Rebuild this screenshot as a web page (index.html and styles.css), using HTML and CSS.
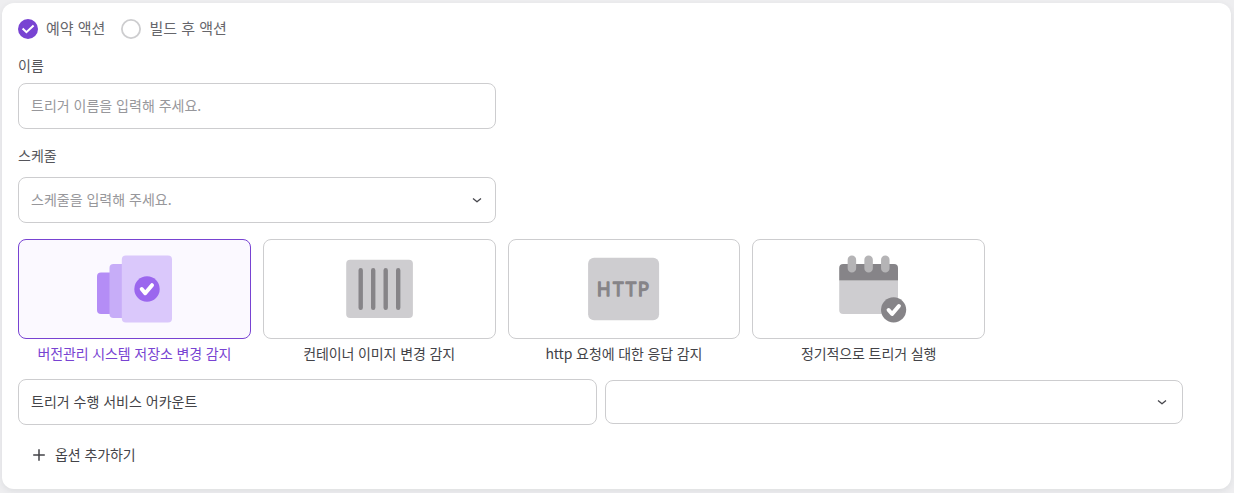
FILE: index.html
```
<!DOCTYPE html>
<html lang="ko">
<head>
<meta charset="utf-8">
<title>트리거</title>
<link rel="stylesheet" href="styles.css">
</head>
<body>
<main class="panel">
  <div class="radios">
    <label class="radio">
      <svg width="20" height="20" viewBox="0 0 20 20"><circle cx="10" cy="10" r="10" fill="#7843d2"/><path d="M4.6 9.6l3.8 3.6L15.6 6.6" fill="none" stroke="#fff" stroke-width="2"/></svg>
      <span>예약 액션</span>
    </label>
    <label class="radio">
      <svg width="20" height="20" viewBox="0 0 20 20"><circle cx="10" cy="10" r="9.1" fill="#fff" stroke="#cdcdcf" stroke-width="1.8"/></svg>
      <span>빌드 후 액션</span>
    </label>
  </div>
  <div class="label label-name">이름</div>
  <div class="field half placeholder">트리거 이름을 입력해 주세요.</div>
  <div class="label label-schedule">스케줄</div>
  <div class="field half placeholder">
    <span>스케줄을 입력해 주세요.</span>
    <svg class="chevron" width="12" height="12" viewBox="0 0 12 12"><path d="M2 4.5L6 7.8L10 4.5"/></svg>
  </div>
  <div class="types">
    <div class="type selected">
      <div class="tile">
        <svg width="80" height="80" viewBox="0 0 80 80"><rect x="3" y="23.4" width="20" height="41.6" rx="4" fill="#b48df6"/><rect x="15.5" y="15" width="20" height="54" rx="4" fill="#c7adf8"/><rect x="27.8" y="6.5" width="50.2" height="67" rx="4" fill="#dac8fb"/><circle cx="53" cy="40" r="12.7" fill="#9b67ee"/><path d="M47.7 40l3.5 4.2 6.8-8" fill="none" stroke="#fff" stroke-width="4" stroke-linecap="round" stroke-linejoin="round"/></svg>
      </div>
      <div class="caption">버전관리 시스템 저장소 변경 감지</div>
    </div>
    <div class="type">
      <div class="tile">
        <svg width="80" height="80" viewBox="0 0 80 80"><rect x="7.2" y="10.8" width="66.7" height="58.3" rx="4" fill="#cecdd0"/><path d="M21.7 21.2v37.6M34.2 21.2v37.6M46.7 21.2v37.6M59.2 21.2v37.6" stroke="#868488" stroke-width="4.4" stroke-linecap="round"/></svg>
      </div>
      <div class="caption">컨테이너 이미지 변경 감지</div>
    </div>
    <div class="type">
      <div class="tile">
        <svg width="80" height="80" viewBox="0 0 80 80"><rect x="4.1" y="8.8" width="71" height="62.4" rx="6" fill="#cecdd0"/><text class="http" transform="translate(0 47.3) scale(.92 1)" x="14 31.6 45.4 58.4">HTTP</text></svg>
      </div>
      <div class="caption">http 요청에 대한 응답 감지</div>
    </div>
    <div class="type">
      <div class="tile">
        <svg width="80" height="80" viewBox="0 0 80 80"><path d="M10.2 31.5h58.8V61a4 4 0 0 1-4 4H14.2a4 4 0 0 1-4-4z" fill="#cecdd0"/><path d="M14.2 15h50.8a4 4 0 0 1 4 4v12.5H10.2V19a4 4 0 0 1 4-4z" fill="#868488"/><path d="M22.9 10.8v8.4M39.6 10.8v8.4M56.3 10.8v8.4" stroke="#b5b4b6" stroke-width="8.5" stroke-linecap="round"/><circle cx="64.6" cy="60.8" r="12.6" fill="#868488"/><path d="M59.6 61l3.5 4 6.8-8" fill="none" stroke="#fff" stroke-width="4" stroke-linecap="round" stroke-linejoin="round"/></svg>
      </div>
      <div class="caption">정기적으로 트리거 실행</div>
    </div>
  </div>
  <div class="account">
    <div class="field">트리거 수행 서비스 어카운트</div>
    <div class="field picker">
      <svg class="chevron" width="12" height="12" viewBox="0 0 12 12"><path d="M2 4.5L6 7.8L10 4.5"/></svg>
    </div>
  </div>
  <div class="add">
    <svg width="12" height="12" viewBox="0 0 12 12"><path d="M6 .2v11.6M.2 6h11.6" stroke="#434348" stroke-width="1.5"/></svg>
    <span>옵션 추가하기</span>
  </div>
</main>
</body>
</html>
```
FILE: styles.css
```
* { box-sizing: border-box; }
body {
  margin: 0;
  height: 493px;
  padding: 3px 3px 4px 2px;
  overflow: hidden;
  background: #eeeef0;
  color: #434348;
  font: 14px/20px "Noto Sans CJK KR", sans-serif;
}
svg { display: block; flex: none; }
.panel {
  height: 486px;
  padding: 16px 48px 0 16px;
  background: #fff;
  border-radius: 12px;
  box-shadow: 0 2px 6px rgba(60, 70, 80, .09);
}
.radios { display: flex; gap: 16px; height: 20px; font-size: 15px; color: #66666b; }
.radio { display: flex; align-items: center; gap: 8px; }
.radio span { padding-bottom: 2px; }
.label { color: #55555a; }
.label-name { margin: 16px 0 8px; }
.label-schedule { margin: 16px 0 12px; }
.field {
  display: flex;
  align-items: center;
  justify-content: space-between;
  height: 46px;
  padding: 0 12px 2px;
  border: 1px solid #cdcdcf;
  border-radius: 8px;
}
.half { width: 478px; }
.placeholder { color: #97979b; }
.chevron { margin-top: 2px; }
.chevron path { fill: none; stroke: #46464c; stroke-width: 1.3; stroke-linejoin: round; }
.types {
  display: grid;
  grid-template-columns: repeat(4, 1fr);
  gap: 12px;
  width: 967px;
  margin-top: 16px;
}
.tile {
  display: flex;
  align-items: center;
  justify-content: center;
  height: 100px;
  border: 1px solid #cdcdcf;
  border-radius: 8px;
}
.selected .tile { border-color: #7843d2; background: #fbf9ff; }
.caption { margin: 4px 0 1px; text-align: center; white-space: nowrap; letter-spacing: -.12px; }
.selected .caption { color: #7843d2; }
.http {
  font: 400 20.5px "Noto Sans", sans-serif;
  fill: #868488;
  stroke: #868488;
  stroke-width: 1.3;
  stroke-linejoin: round;
}
.account {
  display: grid;
  grid-template-columns: 579px 578px;
  align-items: center;
  gap: 8px;
  margin-top: 15px;
}
.picker { height: 44px; justify-content: flex-end; padding-right: 14px; }
.add { display: flex; align-items: center; gap: 10px; margin: 19px 0 0 15px; letter-spacing: -.1px; }
.add span { padding-bottom: 1px; }
```
